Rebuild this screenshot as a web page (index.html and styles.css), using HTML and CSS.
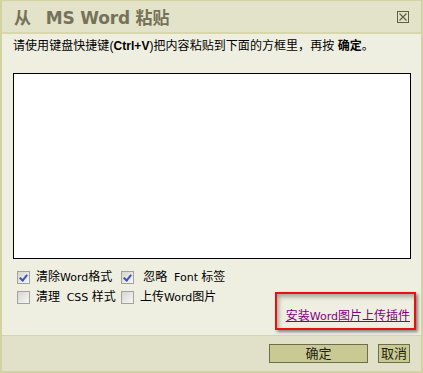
FILE: index.html
```html
<!DOCTYPE html>
<html lang="zh-CN">
<head>
  <meta charset="UTF-8">
  <title>从 MS Word 粘贴</title>
  <link rel="stylesheet" href="styles.css">
</head>
<body>

  <div class="dialog">
    <div class="title-bar">
      <span class="title">从<span class="title-en">MS Word</span> 粘贴</span>
      <span class="close">
        <svg width="12" height="12" viewBox="0 0 12 12">
          <rect x="0.5" y="0.5" width="11" height="11" fill="none" stroke="#5f5f3f"/>
          <path d="M2.5 2.5 L9.5 9.5 M9.5 2.5 L2.5 9.5" stroke="#5f5f3f" stroke-width="1.2"/>
        </svg>
      </span>
    </div>

    <div class="body">
      <p class="hint">请使用键盘快捷键(<b>Ctrl+V</b>)把内容粘贴到下面的方框里，再按 <b>确定</b>。</p>
      <textarea class="paste-box"></textarea>

      <div class="options">
        <div class="checks">
          <label><span class="check on"></span><span>清除<span class="latin">Word</span>格式</span></label>
          <label><span class="check on"></span><span>&nbsp;忽略&nbsp; <span class="latin">Font</span> 标签</span></label>
          <label><span class="check"></span><span>清理&nbsp; <span class="latin">CSS</span> 样式</span></label>
          <label><span class="check"></span><span>上传<span class="latin">Word</span>图片</span></label>
        </div>
        <div class="plugin-box">
          <a href="#">安装<span class="latin">Word</span>图片上传插件</a>
        </div>
      </div>
    </div>

    <div class="footer">
      <button class="btn btn-ok">确定</button>
      <button class="btn">取消</button>
    </div>
  </div>

</body>
</html>
```

FILE: styles.css
```css
/* Reset */
* {
  margin: 0;
  padding: 0;
  box-sizing: border-box;
}

body {
  font-family: 'Liberation Sans', 'Noto Sans CJK SC', sans-serif;
  font-size: 12px;
  color: #000;
  background: #fff;
}

/* Dialog frame */
.dialog {
  width: 423px;
  height: 373px;
  display: flex;
  flex-direction: column;
  border: 2px solid #d3d3a1;
  border-top-width: 1px;
  border-bottom-width: 2px;
  background: #efefe1;
}

.title-bar {
  height: 33px;
  display: flex;
  align-items: center;
  justify-content: space-between;
  padding: 0 12px 0 12px;
  background: #e3e3c9;
  border-bottom: 2px solid #d7d7ab;
}

.title {
  font-family: 'DejaVu Sans', 'Noto Sans CJK SC', sans-serif;
  font-weight: bold;
  font-size: 17px;
  color: #767259;
  letter-spacing: -0.2px;
}

.title-en {
  margin-left: 15px;
}

.close {
  display: flex;
  margin-top: 1px;
}

/* Body */
.body {
  height: 302px;
  padding: 5px 10px 0 11px;
  border-bottom: 1px solid #d5d5a9;
}

.hint {
  line-height: 14px;
  margin-bottom: 20px;
  letter-spacing: 0.05px;
}

.hint b {
  font-weight: bold;
}

.paste-box {
  display: block;
  width: 398px;
  height: 186px;
  border: 1px solid #000;
  background: #fff;
  resize: none;
}

.options {
  display: flex;
  justify-content: space-between;
  margin-top: 12px;
}

.checks {
  display: grid;
  grid-template-columns: 104px auto;
  row-gap: 7px;
  padding-left: 4px;
  align-content: start;
}

.checks label {
  display: flex;
  align-items: center;
  gap: 6px;
  line-height: 13px;
  white-space: nowrap;
}

.latin {
  font-family: 'DejaVu Sans', sans-serif;
  font-size: 11px;
}

.check {
  width: 13px;
  height: 13px;
  flex: none;
  border: 1px solid #a2a2a2;
  background: linear-gradient(135deg, #d6d6d0, #f6f6f4);
  position: relative;
}

.check.on::after {
  content: '';
  position: absolute;
  left: 3px;
  top: 1px;
  width: 3px;
  height: 6px;
  border-right: 2px solid #3d52b5;
  border-bottom: 2px solid #3d52b5;
  transform: rotate(40deg);
}

/* Red call-out round the plugin link */
.plugin-box {
  align-self: flex-start;
  margin-top: 21px;
  margin-right: -5px;
  width: 141px;
  height: 38px;
  padding: 12px 4px 0 0;
  text-align: right;
  border: 2px solid #e8110f;
  box-shadow: 2px 2px 3px rgba(0, 0, 0, 0.45), inset 2px 3px 4px rgba(0, 0, 0, 0.3);
}

.plugin-box a {
  color: #800080;
  text-decoration: underline;
}

/* Footer */
.footer {
  flex: 1;
  display: flex;
  justify-content: flex-end;
  align-items: flex-start;
  gap: 10px;
  padding: 8px 11px 0 0;
  background: #e1e1c9;
}

.btn {
  height: 19px;
  padding: 0 2px;
  font-family: 'Liberation Sans', 'Noto Sans CJK SC', sans-serif;
  font-size: 13px;
  line-height: 17px;
  color: #1e1e10;
  background: #c9c994;
  border: 1px solid #6e6e4c;
  cursor: pointer;
}

.btn-ok {
  width: 99px;
}
```
